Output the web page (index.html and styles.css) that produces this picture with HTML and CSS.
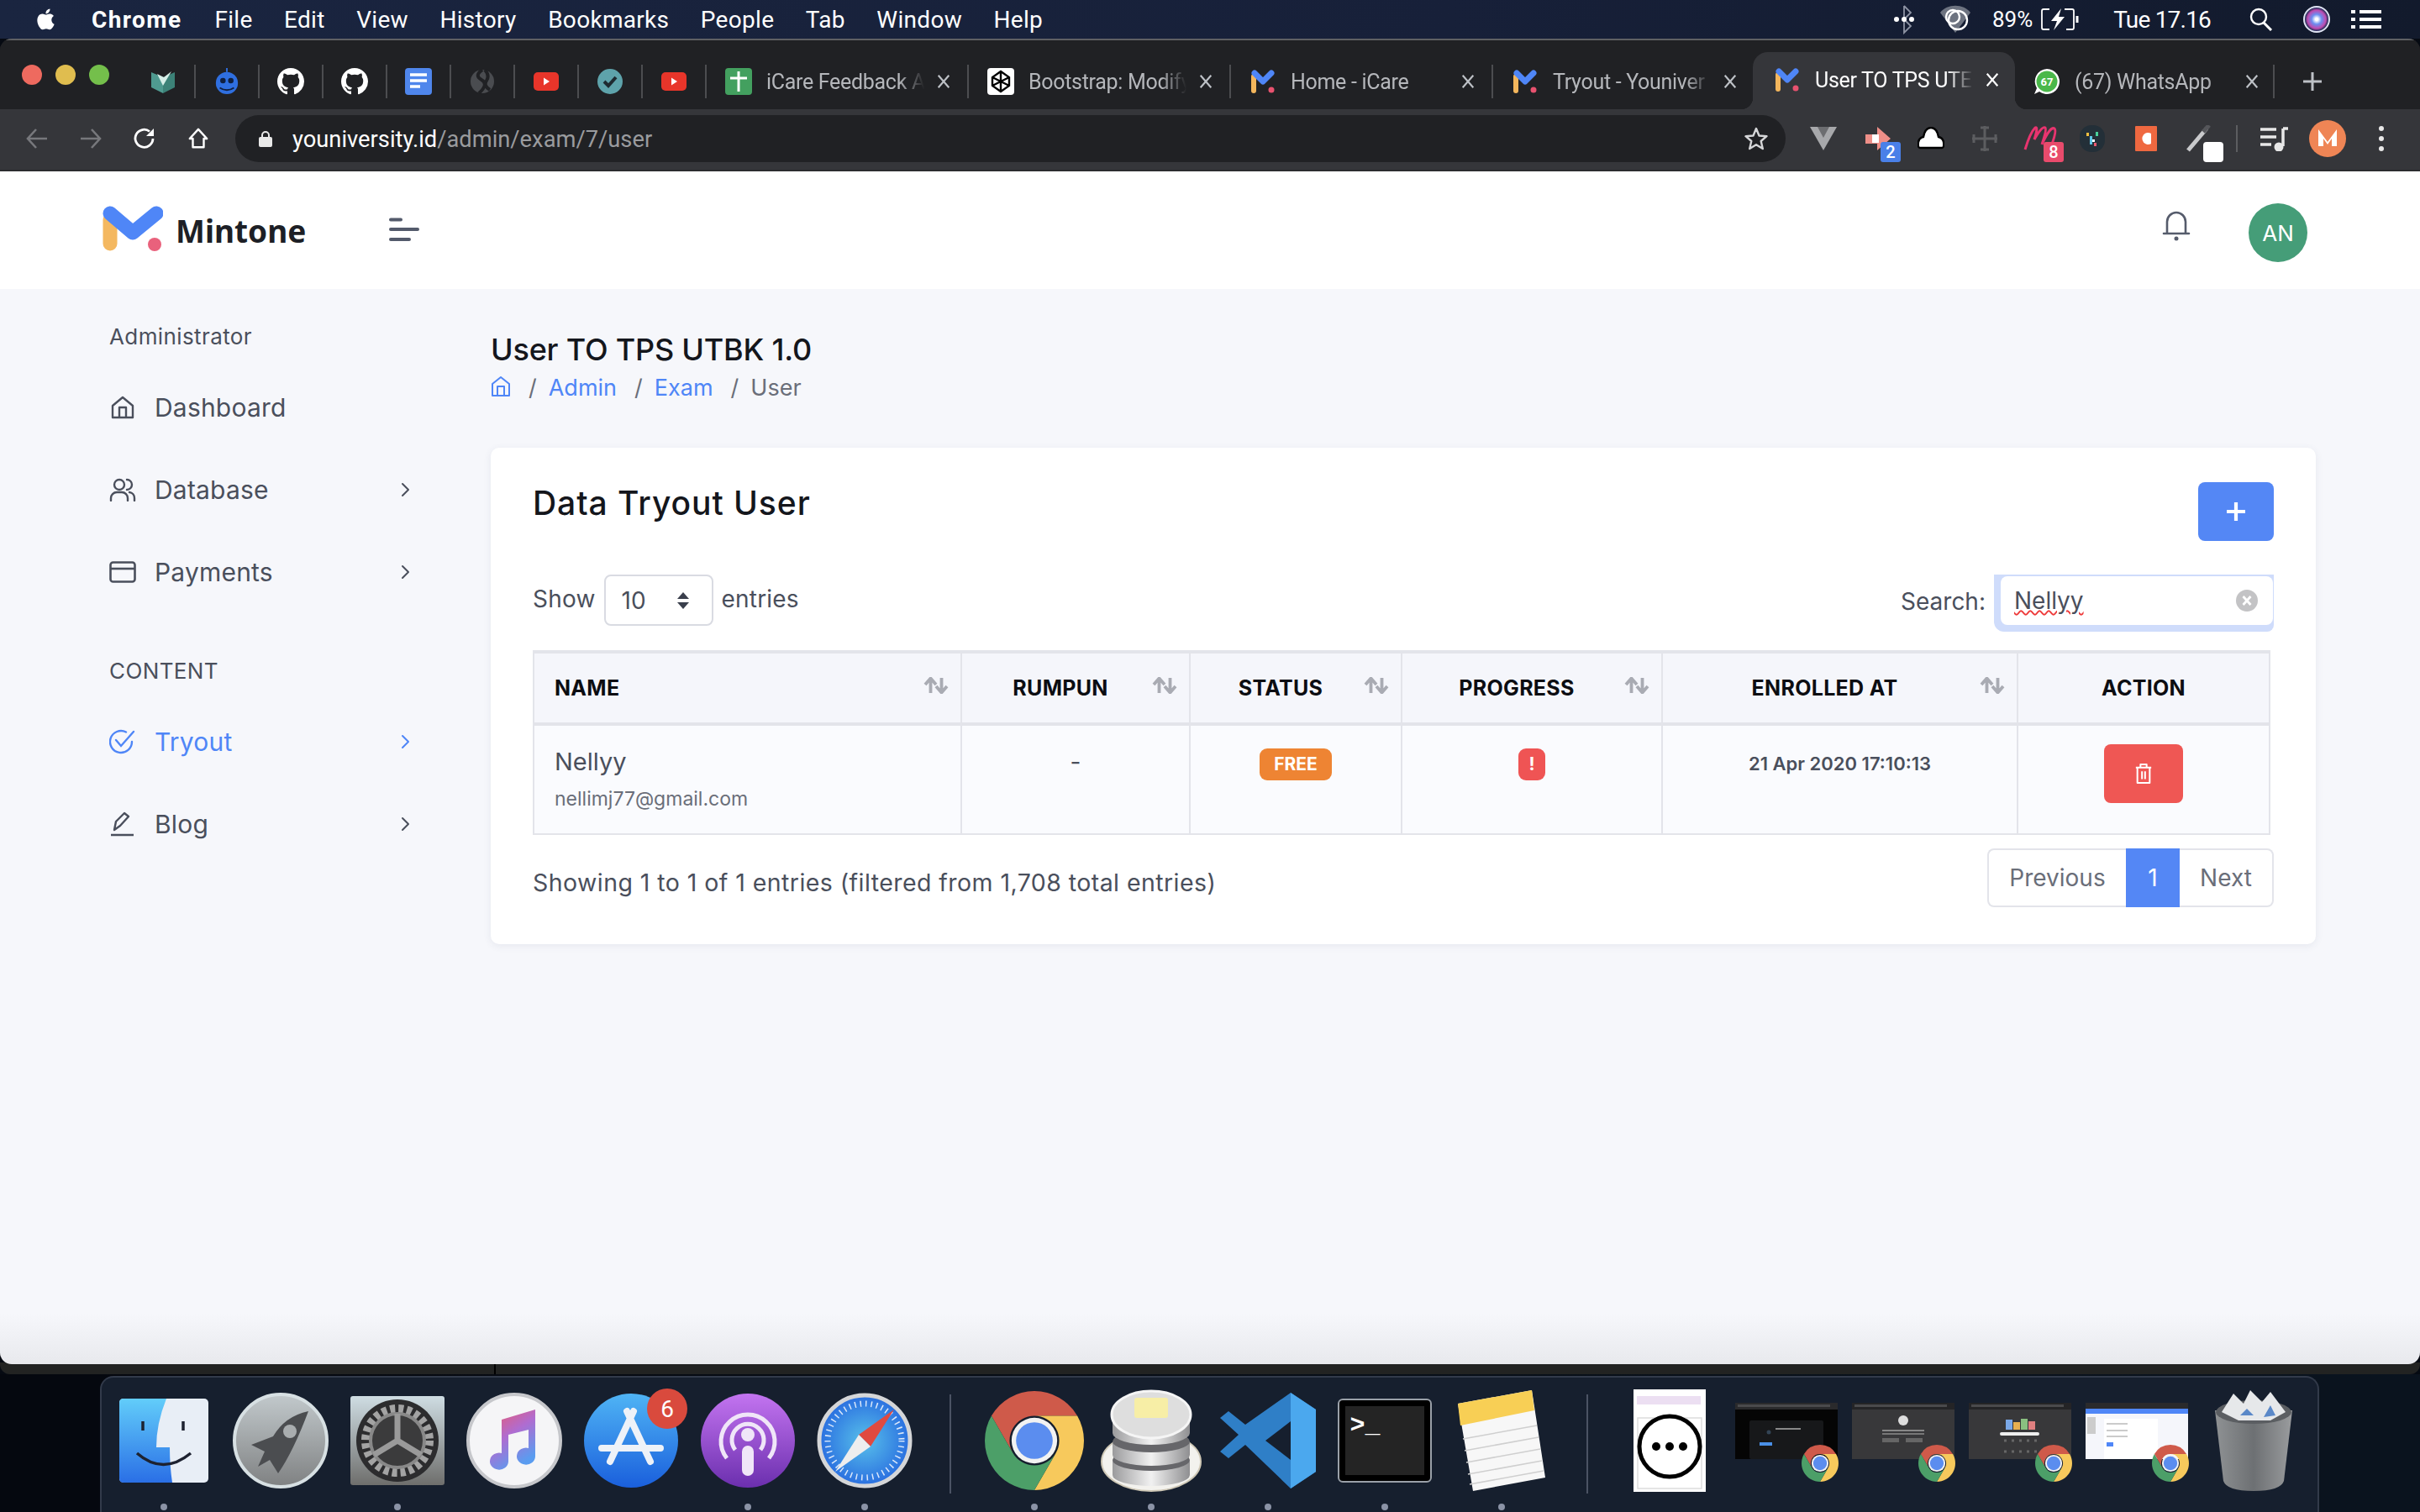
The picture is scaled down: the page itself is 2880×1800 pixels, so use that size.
FILE: index.html
```html
<!DOCTYPE html>
<html lang="en">
<head>
<meta charset="utf-8">
<title>User TO TPS UTBK 1.0</title>
<link rel="stylesheet" href="styles.css">
</head>
<body>
<svg class="defs" width="0" height="0" aria-hidden="true">
  <symbol id="chrome" viewBox="0 0 100 100">
    <path fill="#cf5a4a" d="M50 0A50 50 0 0 1 93.3 25H50A25 25 0 0 0 28.3 62.5L6.7 25A50 50 0 0 1 50 0Z"/>
    <path fill="#f7c95c" d="M93.3 25A50 50 0 0 1 50 100L71.7 62.5A25 25 0 0 0 50 25Z"/>
    <path fill="#4c9f68" d="M6.7 25L28.3 62.5A25 25 0 0 0 71.7 62.5L50 100A50 50 0 0 1 6.7 25Z"/>
    <circle cx="50" cy="50" r="23" fill="#f2f2f2"/><circle cx="50" cy="50" r="18.5" fill="#5b8def"/>
  </symbol>
  <symbol id="mfav" viewBox="0 0 30 30">
    <path d="M4 9V26" stroke="#f3b65c" stroke-width="6" stroke-linecap="round" fill="none"/>
    <path d="M5 5L15 15L25 5" stroke="#4f86f7" stroke-width="7" stroke-linecap="round" stroke-linejoin="round" fill="none"/>
    <circle cx="25" cy="25" r="3.5" fill="#e8526f"/>
  </symbol>
  <symbol id="gh" viewBox="0 0 16 16"><path fill="#fff" d="M8 0C3.58 0 0 3.58 0 8c0 3.54 2.29 6.53 5.47 7.59.4.07.55-.17.55-.38 0-.19-.01-.82-.01-1.49-2.01.37-2.53-.49-2.69-.94-.09-.23-.48-.94-.82-1.13-.28-.15-.68-.52-.01-.53.63-.01 1.08.58 1.23.82.72 1.21 1.87.87 2.33.66.07-.52.28-.87.51-1.07-1.78-.2-3.64-.89-3.64-3.95 0-.87.31-1.59.82-2.15-.08-.2-.36-1.02.08-2.12 0 0 .67-.21 2.2.82.64-.18 1.32-.27 2-.27.68 0 1.36.09 2 .27 1.53-1.04 2.2-.82 2.2-.82.44 1.1.16 1.92.08 2.12.51.56.82 1.27.82 2.15 0 3.07-1.87 3.75-3.65 3.95.29.25.54.73.54 1.48 0 1.07-.01 1.93-.01 2.2 0 .21.15.46.55.38A8.013 8.013 0 0016 8c0-4.42-3.58-8-8-8z"/></symbol>
  <symbol id="yt" viewBox="0 0 30 30"><rect x="0" y="4" width="30" height="22" rx="5" fill="#e8352a"/><path d="M12 10.500L19 15L12 19.500Z" fill="#fff"/></symbol>
  <symbol id="close" viewBox="0 0 20 20"><path d="M3 2L17 18M17 2L3 18" stroke="currentColor" stroke-width="2.400" fill="none"/></symbol>
  <symbol id="chev" viewBox="0 0 24 24"><path d="M9 5L16 12L9 19" stroke="currentColor" stroke-width="2" stroke-linecap="round" stroke-linejoin="round" fill="none"/></symbol>
  <symbol id="sort" viewBox="0 0 30 20"><path d="M8.500 19V2M2 9L8.500 1.500L15 9" stroke="#a9abb3" stroke-width="3.800" fill="none"/><path d="M21.500 1V18M15 11L21.500 18.500L28 11" stroke="#a9abb3" stroke-width="3.800" fill="none"/></symbol>
</svg>

<header class="menubar">
  <nav class="menu-left">
    <svg class="apple" viewBox="0 0 24 24" width="30" height="30"><path fill="#fff" d="M17.05 12.54c-.03-2.52 2.06-3.73 2.15-3.79-1.17-1.71-3-1.95-3.65-1.98-1.55-.16-3.03.91-3.82.91-.79 0-2-.89-3.29-.86-1.69.02-3.25.98-4.12 2.5-1.76 3.05-.45 7.56 1.26 10.03.84 1.21 1.83 2.57 3.14 2.52 1.26-.05 1.74-.82 3.26-.82 1.52 0 1.95.82 3.29.79 1.36-.02 2.22-1.23 3.05-2.45.96-1.41 1.36-2.77 1.38-2.84-.03-.01-2.65-1.02-2.65-4.01zM14.54 5.150c.7-.85 1.17-2.02 1.04-3.19-1 .04-2.22.67-2.94 1.51-.64.75-1.21 1.95-1.06 3.1 1.12.09 2.26-.57 2.96-1.42z"/></svg>
    <b class="app">Chrome</b><span>File</span><span>Edit</span><span>View</span><span>History</span><span>Bookmarks</span><span>People</span><span>Tab</span><span>Window</span><span>Help</span>
  </nav>
  <div class="menu-right">
    <svg class="st-bt" viewBox="0 0 28 36" width="28" height="36"><path d="M14 2L22 10L14 18L22 26L14 34V2M14 18" stroke="#8d93a3" stroke-width="1.800" fill="none"/><circle cx="5" cy="18" r="3" fill="#fff"/><circle cx="14" cy="18" r="3" fill="#fff"/><circle cx="23" cy="18" r="3" fill="#fff"/></svg>
    <svg class="st-cc" viewBox="0 0 40 36" width="40" height="36"><path d="M2 10C10 -1 30 -1 38 10L20 34Z" fill="#6d7380"/><circle cx="23" cy="19" r="11" fill="none" stroke="#fff" stroke-width="2.400"/><circle cx="17" cy="15" r="8" fill="none" stroke="#fff" stroke-width="2.400"/></svg>
    <span class="st-pct">89%</span>
    <svg class="st-bat" viewBox="0 0 46 26" width="46" height="26"><path d="M10 1H3Q1 1 1 3V23Q1 25 3 25H10M28 1H37Q39 1 39 3V23Q39 25 37 25H30" fill="none" stroke="#fff" stroke-width="1.800"/><path d="M43 9V17" stroke="#fff" stroke-width="3"/><path d="M24 0L12 15H19L15 26L28 10H21Z" fill="#fff"/></svg>
    <span class="st-time">Tue 17.16</span>
    <svg class="st-search" viewBox="0 0 28 28" width="28" height="28"><circle cx="11" cy="11" r="9" fill="none" stroke="#fff" stroke-width="2.400"/><path d="M17 18L26 27" stroke="#fff" stroke-width="3"/></svg>
    <span class="st-siri"></span>
    <svg class="st-list" viewBox="0 0 36 22" width="36" height="22"><path d="M0 2H5M10 2H36M0 11H5M10 11H36M0 20H5M10 20H36" stroke="#fff" stroke-width="4"/></svg>
  </div>
</header>

<div class="window">
  <div class="tabstrip">
    <div class="lights"><i class="l-red"></i><i class="l-yel"></i><i class="l-grn"></i></div>
    <div class="pin"><svg viewBox="0 0 30 30" width="30" height="32"><path d="M1 4L15 10V29L1 22Z" fill="#4f9a90"/><path d="M29 4L15 10V29L29 22Z" fill="#3c8278"/><path d="M8 6L15 20L25 3L16 10Z" fill="#d6eee8"/></svg></div>
    <div class="pin"><svg viewBox="0 0 32 34" width="30" height="32"><path d="M16 0V5" stroke="#2f6fe0" stroke-width="2"/><circle cx="16" cy="19" r="14" fill="#2f6fe0"/><circle cx="11" cy="16" r="3.500" fill="#10203f"/><circle cx="21" cy="16" r="3.500" fill="#10203f"/><path d="M7 25Q16 31 25 25" stroke="#10203f" stroke-width="2" fill="none"/></svg></div>
    <div class="pin"><svg width="32" height="32"><use href="#gh"/></svg></div>
    <div class="pin"><svg width="32" height="32"><use href="#gh"/></svg></div>
    <div class="pin"><svg viewBox="0 0 32 32" width="32" height="32"><rect width="32" height="32" rx="4" fill="#4f86ec"/><path d="M6 8H26M6 15H26M6 22H18" stroke="#fff" stroke-width="3.500"/></svg></div>
    <div class="pin"><svg viewBox="0 0 30 30" width="30" height="30"><circle cx="15" cy="15" r="14" fill="#4a4c50"/><path d="M15 1Q5 8 14 13T11 29M18 1Q24 8 20 14T24 25" stroke="#202124" stroke-width="4" fill="none"/></svg></div>
    <div class="pin"><svg width="30" height="30"><use href="#yt"/></svg></div>
    <div class="pin"><svg viewBox="0 0 30 30" width="30" height="30"><circle cx="15" cy="15" r="15" fill="#5ea3ab"/><path d="M8 15L13 20L22 10" stroke="#1e2a30" stroke-width="4" fill="none"/></svg></div>
    <div class="pin"><svg width="30" height="30"><use href="#yt"/></svg></div>

    <div class="tab"><svg class="tab-ico" viewBox="0 0 32 32" width="32" height="32"><rect width="32" height="32" rx="4" fill="#43a05f"/><path d="M16 4V28M6 12H26" stroke="#fff" stroke-width="3"/></svg><span class="tab-title">iCare Feedback A</span><svg class="tab-x" width="18" height="18"><use href="#close"/></svg></div>
    <div class="tab"><svg class="tab-ico" viewBox="0 0 32 32" width="32" height="32"><rect width="32" height="32" rx="4" fill="#fff"/><path d="M16 4L26 11V21L16 28L6 21V11ZM16 4V28M6 11L26 21M26 11L6 21" stroke="#000" stroke-width="2.400" fill="none"/></svg><span class="tab-title">Bootstrap: Modify</span><svg class="tab-x" width="18" height="18"><use href="#close"/></svg></div>
    <div class="tab"><svg class="tab-ico" width="30" height="30"><use href="#mfav"/></svg><span class="tab-title">Home - iCare</span><svg class="tab-x" width="18" height="18"><use href="#close"/></svg></div>
    <div class="tab"><svg class="tab-ico" width="30" height="30"><use href="#mfav"/></svg><span class="tab-title">Tryout - Youniver</span><svg class="tab-x" width="18" height="18"><use href="#close"/></svg></div>
    <div class="tab tab-active"><svg class="tab-ico" width="30" height="30"><use href="#mfav"/></svg><span class="tab-title">User TO TPS UTE</span><svg class="tab-x" width="18" height="18"><use href="#close"/></svg></div>
    <div class="tab tab-last"><svg class="tab-ico" viewBox="0 0 32 32" width="32" height="32"><path d="M16 1A15 15 0 1 1 7 28L1 31L4 24A15 15 0 0 1 16 1Z" fill="#fff"/><circle cx="16" cy="16" r="12.500" fill="#4ab84a"/><text x="16" y="21" class="wa-num">67</text></svg><span class="tab-title">(67) WhatsApp</span><svg class="tab-x" width="18" height="18"><use href="#close"/></svg></div>
    <svg class="newtab" viewBox="0 0 24 24" width="24" height="24"><path d="M12 1V23M1 12H23" stroke="#bdc1c6" stroke-width="3"/></svg>
  </div>

  <div class="toolbar">
    <div class="navbtn"><svg viewBox="0 0 28 28" width="28" height="28"><path d="M26 14H3M13 3L3 14L13 25" stroke="#77787c" stroke-width="2.600" fill="none"/></svg></div>
    <div class="navbtn"><svg viewBox="0 0 28 28" width="28" height="28"><path d="M2 14H25M15 3L25 14L15 25" stroke="#77787c" stroke-width="2.600" fill="none"/></svg></div>
    <div class="navbtn"><svg viewBox="0 0 28 28" width="28" height="28"><path d="M24 14A10.500 10.500 0 1 1 20 5.500" stroke="#fff" stroke-width="2.800" fill="none"/><path d="M25 2V11H16Z" fill="#fff"/></svg></div>
    <div class="navbtn"><svg viewBox="0 0 28 28" width="26" height="28"><path d="M14 2L25 14H21V25H7V14H3Z" stroke="#fff" stroke-width="2.600" fill="none" stroke-linejoin="round"/></svg></div>
    <div class="omnibox">
      <svg class="lock" viewBox="0 0 16 20" width="16" height="20"><path d="M4 9V6A4 4 0 0 1 12 6V9" stroke="#e8e8e8" stroke-width="2" fill="none"/><rect x="0" y="8" width="16" height="12" rx="2" fill="#e8e8e8"/></svg>
      <span class="url"><b>youniversity.id</b>/admin/exam/7/user</span>
      <svg class="star" viewBox="0 0 28 28" width="28" height="28"><path d="M14 2L17.500 10.500L26.500 11.200L19.700 17L21.800 26L14 21.200L6.200 26L8.300 17L1.500 11.200L10.500 10.500Z" stroke="#d5d6d8" stroke-width="2.400" fill="none" stroke-linejoin="round"/></svg>
    </div>
    <div class="ext"><svg viewBox="0 0 32 28" width="32" height="28"><path d="M0 0H32L16 28Z" fill="#a7a8ab"/><path d="M9 0H23L16 13Z" fill="#6c6d70"/></svg></div>
    <div class="ext"><svg viewBox="0 0 32 28" width="32" height="28"><path d="M16 0L32 14L16 28V20H2V9H16Z" fill="#ee8f88"/><rect x="10" y="9" width="8" height="10" fill="#fff"/></svg><span class="xb xb-blue">2</span></div>
    <div class="ext"><svg viewBox="0 0 32 28" width="32" height="28"><path d="M3 25Q0 25 1 18Q2 13 7 12Q9 1 16 1Q23 1 25 12Q30 13 31 18Q32 25 29 25Z" fill="#fff" stroke="#000" stroke-width="2.400"/></svg></div>
    <div class="ext"><svg viewBox="0 0 32 32" width="32" height="32"><path d="M16 1V31M1 16H31M11 3H21M11 29H21M3 11V21M29 11V21" stroke="#5c5d60" stroke-width="3"/></svg></div>
    <div class="ext"><svg class="ext-m" viewBox="0 0 44 30" width="44" height="30"><path d="M2 28Q8 8 14 2Q18 0 13 16Q22 0 26 2Q28 4 22 22Q32 0 37 3Q40 6 33 24" stroke="#e8346f" stroke-width="3" fill="none"/></svg><span class="xb xb-red">8</span></div>
    <div class="ext"><svg viewBox="0 0 30 32" width="30" height="32"><rect width="30" height="32" rx="14" fill="#232f38"/><rect x="8" y="9" width="3" height="4" fill="#f0c040"/><rect x="12" y="13" width="3" height="10" fill="#5ec8e8"/><rect x="19" y="8" width="3" height="5" fill="#4ad09a"/><rect x="15" y="17" width="3" height="3" fill="#fff"/><rect x="17" y="21" width="3" height="4" fill="#e85a70"/></svg></div>
    <div class="ext"><svg viewBox="0 0 26 30" width="26" height="30"><rect width="26" height="30" rx="1" fill="#ef6840"/><path d="M19 9A7 7 0 1 0 19 21Z" fill="#fff"/></svg></div>
    <div class="ext"><svg viewBox="0 0 32 32" width="32" height="32"><path d="M2 30L24 4" stroke="#c9cacc" stroke-width="5"/><path d="M20 8L27 0" stroke="#55565a" stroke-width="5"/></svg><span class="xb xb-white"></span></div>
    <span class="tb-sep"></span>
    <div class="ext"><svg viewBox="0 0 34 30" width="34" height="30"><path d="M1 4H20M1 13H20M1 22H14" stroke="#e8e8e8" stroke-width="3.500"/><path d="M28 3V24" stroke="#e8e8e8" stroke-width="3.500"/><path d="M28 3H34" stroke="#e8e8e8" stroke-width="3.500"/><circle cx="23" cy="25" r="5.500" fill="#e8e8e8"/></svg></div>
    <div class="ext"><span class="profile"><svg viewBox="0 0 44 44" width="44" height="44"><path d="M11 31V11L22 26L33 11V31H27V22L22 29L17 22V31Z" fill="#fff"/></svg></span></div>
    <div class="ext"><span class="kebab"><i></i><i></i><i></i></span></div>
  </div>

  <div class="site">
    <div class="topbar">
      <svg class="logo" viewBox="0 0 72 56" width="72" height="56"><path d="M9 17V45" stroke="#f4b860" stroke-width="17" stroke-linecap="round" fill="none"/><path d="M9 9L36 32L64 9" stroke="#4f86f7" stroke-width="17" stroke-linecap="round" stroke-linejoin="round" fill="none"/><circle cx="62" cy="46" r="8" fill="#e9617c"/></svg>
      <span class="brand">Mintone</span>
      <svg class="burger" viewBox="0 0 36 28" width="36" height="28"><path d="M2 2.500H14M2 14H34M2 26H24" stroke="#535a6b" stroke-width="4" stroke-linecap="round"/></svg>
      <svg class="bell" viewBox="0 0 34 36" width="34" height="36"><path d="M2 27H32M6 27V13A11 11 0 0 1 28 13V27" stroke="#565c6c" stroke-width="2.600" fill="none" stroke-linecap="round"/><circle cx="17" cy="33" r="2.500" fill="#565c6c"/></svg>
      <div class="avatar">AN</div>
    </div>

    <div class="page">
      <aside class="sidebar">
        <div class="side-label">Administrator</div>
        <a class="side-item"><svg class="side-ico" viewBox="0 0 28 28" width="28" height="28"><path d="M2 26V12L14 2L26 12V26ZM10 26V14H18V26" stroke="currentColor" stroke-width="2.400" fill="none" stroke-linejoin="round"/></svg><span>Dashboard</span></a>
        <a class="side-item"><svg class="side-ico" viewBox="0 0 32 28" width="32" height="28"><circle cx="12" cy="8" r="6" stroke="currentColor" stroke-width="2.400" fill="none"/><path d="M2 27V24A7 7 0 0 1 9 17H15A7 7 0 0 1 22 24V27M21 2A6 6 0 0 1 21 14M24 17A7 7 0 0 1 30 24V27" stroke="currentColor" stroke-width="2.400" fill="none" stroke-linecap="round"/></svg><span>Database</span><svg class="side-chev" width="24" height="24"><use href="#chev"/></svg></a>
        <a class="side-item"><svg class="side-ico" viewBox="0 0 32 26" width="32" height="26"><rect x="1.500" y="1.500" width="29" height="23" rx="3" stroke="currentColor" stroke-width="2.600" fill="none"/><path d="M1.500 9H30.500" stroke="currentColor" stroke-width="2.600"/></svg><span>Payments</span><svg class="side-chev" width="24" height="24"><use href="#chev"/></svg></a>
        <div class="side-label side-label-2">CONTENT</div>
        <a class="side-item side-on"><svg class="side-ico" viewBox="0 0 32 30" width="32" height="30"><path d="M27 15A13 13 0 1 1 20 3.500" stroke="currentColor" stroke-width="2.400" fill="none" stroke-linecap="round"/><path d="M8 13L14 20L29 3" stroke="currentColor" stroke-width="2.400" fill="none" stroke-linecap="round"/></svg><span>Tryout</span><svg class="side-chev" width="24" height="24"><use href="#chev"/></svg></a>
        <a class="side-item"><svg class="side-ico" viewBox="0 0 30 30" width="30" height="30"><path d="M5 22L7 12L17 2L22 6L12 17ZM1 28H28" stroke="currentColor" stroke-width="2.400" fill="none" stroke-linejoin="round"/></svg><span>Blog</span><svg class="side-chev" width="24" height="24"><use href="#chev"/></svg></a>
      </aside>

      <main class="main">
        <h1 class="page-title">User TO TPS UTBK 1.0</h1>
        <div class="crumbs">
          <svg class="crumb-home" viewBox="0 0 24 26" width="24" height="26"><path d="M2 24V10L12 2L22 10V24ZM8 24V13H16V24" stroke="#4f86f7" stroke-width="2" fill="none" stroke-linejoin="round"/></svg>
          <span class="crumb-sep">/</span><a class="crumb-link">Admin</a><span class="crumb-sep">/</span><a class="crumb-link">Exam</a><span class="crumb-sep">/</span><span class="crumb-now">User</span>
        </div>

        <section class="card">
          <div class="card-head">
            <h2 class="card-title">Data Tryout User</h2>
            <button class="btn-add"><svg viewBox="0 0 26 26" width="26" height="26"><path d="M13 2V24M2 13H24" stroke="#fff" stroke-width="4.200"/></svg></button>
          </div>
          <div class="controls">
            <div class="length"><span>Show</span>
              <div class="select"><span>10</span><svg viewBox="0 0 16 24" width="16" height="24"><path d="M8 2L15 10H1ZM8 22L1 14H15Z" fill="#3a3f4c"/></svg></div>
              <span>entries</span></div>
            <div class="search"><span>Search:</span>
              <div class="ring"><div class="search-box"><span class="typed">Nellyy</span><svg viewBox="0 0 28 28" width="28" height="28"><circle cx="14" cy="14" r="13" fill="#c3c3c5"/><path d="M9.500 9L18.500 19M18.500 9L9.500 19" stroke="#fff" stroke-width="2.800"/></svg></div></div>
            </div>
          </div>

          <table class="grid">
            <colgroup><col class="c1"><col class="c2"><col class="c3"><col class="c4"><col class="c5"><col class="c6"></colgroup>
            <thead><tr>
              <th class="th-left">NAME<svg class="sort" width="30" height="20"><use href="#sort"/></svg></th>
              <th class="th-sort">RUMPUN<svg class="sort" width="30" height="20"><use href="#sort"/></svg></th>
              <th class="th-sort">STATUS<svg class="sort" width="30" height="20"><use href="#sort"/></svg></th>
              <th class="th-sort">PROGRESS<svg class="sort" width="30" height="20"><use href="#sort"/></svg></th>
              <th class="th-sort">ENROLLED AT<svg class="sort" width="30" height="20"><use href="#sort"/></svg></th>
              <th>ACTION</th>
            </tr></thead>
            <tbody><tr>
              <td class="td-name"><div class="u-name">Nellyy</div><div class="u-mail">nellimj77@gmail.com</div></td>
              <td class="td-dash">-</td>
              <td class="td-badge"><span class="badge badge-free">FREE</span></td>
              <td class="td-badge"><span class="badge badge-warn">!</span></td>
              <td class="td-date">21 Apr 2020 17:10:13</td>
              <td class="td-act"><button class="btn-del"><svg viewBox="0 0 24 28" width="22" height="26"><path d="M2 6H22M8 6V2H16V6M4 6V26H20V6M10 11V21M14 11V21" stroke="#fff" stroke-width="2.200" fill="none" stroke-linejoin="round"/></svg></button></td>
            </tr></tbody>
          </table>

          <div class="foot">
            <span class="info">Showing 1 to 1 of 1 entries (filtered from 1,708 total entries)</span>
            <div class="pager"><a class="pg pg-prev">Previous</a><a class="pg pg-on">1</a><a class="pg pg-next">Next</a></div>
          </div>
        </section>
      </main>
    </div>
  </div>
</div>

<div class="behind"></div>

<footer class="dockrow">
  <div class="dock">
    <div class="slot"><svg viewBox="0 0 106 100" width="106" height="100"><defs><linearGradient id="fb" x1="0" y1="0" x2="0" y2="1"><stop offset="0" stop-color="#62cdfa"/><stop offset="1" stop-color="#2a6fe6"/></linearGradient></defs><rect width="106" height="100" rx="5" fill="#e8eef6"/><path d="M5 0H56Q44 30 44 58H60Q60 80 63 100H5Q0 100 0 95V5Q0 0 5 0Z" fill="url(#fb)"/><path d="M28 27V38M76 27V38" stroke="#1d2230" stroke-width="3.500"/><path d="M21 65Q52 92 85 65" stroke="#1d2230" stroke-width="3.500" fill="none"/></svg><i class="dot"></i></div>
    <div class="slot"><svg viewBox="0 0 114 114" width="114" height="114"><defs><linearGradient id="lp" x1="0" y1="0" x2="0" y2="1"><stop offset="0" stop-color="#c2c9cc"/><stop offset="1" stop-color="#7f8182"/></linearGradient></defs><circle cx="57" cy="57" r="55" fill="url(#lp)" stroke="#d7e0e3" stroke-width="4"/><path d="M90 22Q62 28 48 52L22 62L38 70L30 88L44 80L54 96Q72 70 90 22Z" fill="#4b4d50"/><circle cx="68" cy="46" r="8" fill="#a9adaf"/></svg><i class="dot dot-off"></i></div>
    <div class="slot"><svg viewBox="0 0 112 106" width="112" height="106"><defs><linearGradient id="sp" x1="0" y1="0" x2="0" y2="1"><stop offset="0" stop-color="#cfdde3"/><stop offset="1" stop-color="#6e6e6c"/></linearGradient></defs><rect width="112" height="106" rx="3" fill="url(#sp)"/><circle cx="56" cy="53" r="49" fill="#2c2c2e"/><circle cx="56" cy="53" r="38" fill="none" stroke="#a3a3a3" stroke-width="10" stroke-dasharray="6 4"/><circle cx="56" cy="53" r="32" fill="#3b3b3c" stroke="#888" stroke-width="4"/><path d="M56 53V21M56 53L28 70M56 53L84 70" stroke="#9a9a9a" stroke-width="7"/></svg><i class="dot"></i></div>
    <div class="slot"><svg viewBox="0 0 114 114" width="114" height="114"><defs><linearGradient id="mn" x1="0" y1="0" x2="0.500" y2="1"><stop offset="0" stop-color="#ee5868"/><stop offset="0.500" stop-color="#b06cd0"/><stop offset="1" stop-color="#5a9cf0"/></linearGradient></defs><circle cx="57" cy="57" r="55" fill="#f5f5f7" stroke="#c6c7cb" stroke-width="4"/><path d="M42 32L82 20V76A11 10 0 1 1 74 66V44L50 50V82A11 10 0 1 1 42 72Z" fill="url(#mn)"/></svg><i class="dot dot-off"></i></div>
    <div class="slot"><svg viewBox="0 0 114 114" width="114" height="114"><defs><linearGradient id="as" x1="0" y1="0" x2="0" y2="1"><stop offset="0" stop-color="#4fb4f5"/><stop offset="1" stop-color="#1a5fdc"/></linearGradient></defs><circle cx="57" cy="57" r="56" fill="url(#as)"/><path d="M52 22L80 82M60 22L32 82M22 66H92" stroke="#eef2f8" stroke-width="8" stroke-linecap="round"/></svg><span class="dock-badge">6</span><i class="dot dot-off"></i></div>
    <div class="slot"><svg viewBox="0 0 114 114" width="114" height="114"><defs><linearGradient id="pc" x1="0" y1="0" x2="0" y2="1"><stop offset="0" stop-color="#c374f0"/><stop offset="1" stop-color="#6b2fae"/></linearGradient></defs><circle cx="57" cy="57" r="56" fill="url(#pc)"/><path d="M32 78A32 32 0 1 1 82 78M42 68A19 19 0 1 1 72 68" stroke="#f0e6f8" stroke-width="5" fill="none"/><circle cx="57" cy="50" r="8" fill="#f0e6f8"/><rect x="50" y="63" width="14" height="36" rx="7" fill="#f0e6f8"/></svg><i class="dot"></i></div>
    <div class="slot"><svg viewBox="0 0 114 114" width="114" height="114"><defs><radialGradient id="sf"><stop offset="0" stop-color="#58c0ea"/><stop offset="1" stop-color="#2a6fe0"/></radialGradient></defs><circle cx="57" cy="57" r="54" fill="url(#sf)" stroke="#d5d6d8" stroke-width="5"/><circle cx="57" cy="57" r="44" fill="none" stroke="#dbe8fb" stroke-width="7" stroke-dasharray="1.500 5"/><path d="M92 20L64 64L50 50Z" fill="#e04a40"/><path d="M22 94L50 50L64 64Z" fill="#eee"/></svg><i class="dot"></i></div>
    <span class="dock-sep"></span>
    <div class="slot"><svg width="118" height="118"><use href="#chrome"/></svg><i class="dot"></i></div>
    <div class="slot"><svg viewBox="0 0 120 122" width="120" height="122"><defs><linearGradient id="sq" x1="0" y1="0" x2="1" y2="0"><stop offset="0" stop-color="#9b9b9d"/><stop offset="0.500" stop-color="#f1f1f1"/><stop offset="1" stop-color="#8f8f91"/></linearGradient></defs><ellipse cx="60" cy="86" rx="59" ry="35" fill="#f3f2ee" stroke="#cfc8b6" stroke-width="2"/><rect x="14" y="84" width="92" height="18" fill="url(#sq)"/><ellipse cx="60" cy="102" rx="46" ry="13" fill="url(#sq)"/><ellipse cx="60" cy="84" rx="46" ry="13" fill="#66666a"/><rect x="14" y="62" width="92" height="16" fill="url(#sq)"/><ellipse cx="60" cy="78" rx="46" ry="13" fill="url(#sq)"/><ellipse cx="60" cy="62" rx="46" ry="13" fill="#66666a"/><rect x="14" y="30" width="92" height="22" fill="url(#sq)"/><ellipse cx="60" cy="52" rx="46" ry="14" fill="url(#sq)"/><ellipse cx="60" cy="30" rx="47" ry="28" fill="#dedede" stroke="#f5f5f5" stroke-width="3"/><rect x="40" y="10" width="40" height="24" rx="3" fill="#f7eea6"/></svg><i class="dot"></i></div>
    <div class="slot"><svg viewBox="0 0 114 114" width="114" height="114"><path d="M84 0L114 20V94L84 114L30 62L10 78L0 70L22 50L0 30L10 22L30 38Z" fill="#2f7fc7"/><path d="M84 0L114 20V94L84 114Z" fill="#4ba8ee"/><path d="M84 34L54 57L84 80Z" fill="#161f2e"/></svg><i class="dot"></i></div>
    <div class="slot"><div class="term"><span class="term-inner">&gt;_</span></div><i class="dot"></i></div>
    <div class="slot"><svg viewBox="0 0 104 120" width="104" height="120"><path d="M0 16L88 0L104 104L18 120Z" fill="#f7f7f7"/><path d="M0 16L88 0L91 24L3 42Z" fill="#f8cf55"/><path d="M6 58L94 42M8 72L96 56M10 86L98 70M12 100L100 84M14 112L102 96" stroke="#cfcfcf" stroke-width="1.500"/></svg><i class="dot"></i></div>
    <span class="dock-sep dock-sep-2"></span>
    <div class="slot"><svg viewBox="0 0 86 122" width="86" height="122"><rect width="86" height="122" fill="#fff"/><rect x="4" y="8" width="76" height="10" fill="#ecdff2"/><rect x="5" y="34" width="76" height="84" fill="none" stroke="#ddd" stroke-width="1.500"/><ellipse cx="43" cy="68" rx="36" ry="36" fill="none" stroke="#000" stroke-width="5"/><circle cx="27" cy="68" r="5" fill="#000"/><circle cx="43" cy="68" r="5" fill="#000"/><circle cx="59" cy="68" r="5" fill="#000"/></svg><i class="dot dot-off"></i></div>
    <div class="slot"><div class="thumb thumb-black"><svg viewBox="0 0 122 67" width="122" height="67"><rect width="122" height="8" fill="#2a2a2c"/><rect x="3" y="2" width="110" height="3" fill="#4a4a4c"/><rect x="17" y="21" width="88" height="46" rx="2" fill="#17181a"/><rect x="29" y="47" width="15" height="4" fill="#4a90e8"/><circle cx="40" cy="35" r="2.500" fill="#345"/><rect x="48" y="30" width="30" height="2" fill="#888"/></svg><svg class="mini" width="44" height="44"><use href="#chrome"/></svg></div></div>
    <div class="slot"><div class="thumb thumb-grey"><svg viewBox="0 0 122 67" width="122" height="67"><rect width="122" height="8" fill="#242426"/><rect x="3" y="2" width="110" height="3" fill="#4a4a4c"/><circle cx="61" cy="21" r="6" fill="#ddd"/><rect x="36" y="32" width="50" height="2" fill="#888"/><rect x="36" y="36" width="50" height="2" fill="#777"/><rect x="36" y="42" width="20" height="5" fill="#666"/><rect x="64" y="42" width="20" height="5" fill="#666"/></svg><svg class="mini" width="44" height="44"><use href="#chrome"/></svg></div></div>
    <div class="slot"><div class="thumb thumb-grey"><svg viewBox="0 0 122 67" width="122" height="67"><rect width="122" height="8" fill="#242426"/><rect x="3" y="2" width="110" height="3" fill="#4a4a4c"/><rect x="44" y="20" width="8" height="12" fill="#7aa8e8"/><rect x="53" y="23" width="8" height="9" fill="#e8b050"/><rect x="62" y="19" width="8" height="13" fill="#8ac080"/><rect x="71" y="22" width="8" height="10" fill="#e08080"/><rect x="37" y="35" width="47" height="4" rx="2" fill="#eee"/><path d="M42 45H82M42 58H82" stroke="#666" stroke-width="3" stroke-dasharray="3 6"/></svg><svg class="mini" width="44" height="44"><use href="#chrome"/></svg></div></div>
    <div class="slot"><div class="thumb thumb-white"><svg viewBox="0 0 122 67" width="122" height="67"><rect width="122" height="7" fill="#2a2a2c"/><rect y="7" width="122" height="6" fill="#4f86f7"/><rect x="0" y="13" width="122" height="54" fill="#f5f6fb"/><rect x="2" y="17" width="10" height="20" fill="#ccc"/><rect x="22" y="19" width="64" height="48" fill="#fff"/><rect x="25" y="47" width="8" height="5" fill="#4f86f7"/><path d="M25 25H50M25 33H50M25 40H50" stroke="#bbb" stroke-width="1.500"/></svg><svg class="mini" width="44" height="44"><use href="#chrome"/></svg></div></div>
    <div class="slot"><svg viewBox="0 0 92 120" width="92" height="120"><defs><linearGradient id="tr" x1="0" y1="0" x2="1" y2="0"><stop offset="0" stop-color="#8f9294"/><stop offset="0.500" stop-color="#6d7073"/><stop offset="1" stop-color="#9a9c9e"/></linearGradient></defs><path d="M0 24H92L82 108Q78 120 46 120Q14 120 10 108Z" fill="url(#tr)"/><ellipse cx="46" cy="26" rx="45" ry="14" fill="#5b5e62"/><path d="M8 26L22 4L34 16L42 0L56 14L66 2L84 26L66 36H28Z" fill="#e6e8ea"/><path d="M30 30L38 22L46 30ZM58 32L66 18L72 30Z" fill="#5a88c8"/></svg></div>
  </div>
</footer>
</body>
</html>
```

FILE: styles.css
```css
* { box-sizing: border-box; }
html, body { margin: 0; padding: 0; }
body {
  width: 2880px; height: 1800px; overflow: hidden;
  background: #060a12;
  display: flex; flex-direction: column;
  font-family: Inter, "Liberation Sans", sans-serif;
  color: #4a4f5c;
}
.defs { position: absolute; }
svg { display: block; flex: none; }

/* menu bar */
.menubar {
  height: 46px; flex: none;
  display: flex; align-items: center; justify-content: space-between;
  background: linear-gradient(90deg, #1a2540, #172039 60%, #121a2c);
  color: #fff; font-family: Roboto, sans-serif; font-size: 28px;
}
.menu-left { display: flex; align-items: center; }
.apple { margin: 0 39px 0 40px; }
.menu-left span { margin-right: 37.500px; letter-spacing: .3px; }
.menu-left .app { margin-right: 39px; font-weight: 700; letter-spacing: 1.400px; }
.menu-right { display: flex; align-items: center; }
.st-bt { margin-right: 27px; }
.st-cc { margin-right: 24px; }
.st-pct { margin-right: 10px; font-size: 26px; }
.st-bat { margin-right: 40px; }
.st-time { margin-right: 46px; letter-spacing: -.8px; }
.st-search { margin-right: 36px; }
.st-siri {
  width: 32px; height: 32px; border-radius: 50%; margin-right: 25px;
  background: radial-gradient(circle, #fff 8%, #6a8df0 30%, #c04bb0 55%, #1d2b56 70%);
  border: 2px solid #dfe3f2;
}
.st-list { margin-right: 46px; }

/* window */
.window {
  height: 1578px; flex: none;
  display: flex; flex-direction: column;
  border-radius: 14px; overflow: hidden;
  background: #202124;
}
.tabstrip {
  height: 84px; flex: none;
  display: flex; align-items: flex-end;
  border-top: 2px solid #5f6063;
  background: #202124;
  color: #b5b7bb;
  font-family: Roboto, sans-serif;
  font-size: 25px;
}
.lights { width: 157px; height: 68px; align-self: flex-start; padding: 29px 0 0 26px; display: flex; gap: 16px; }
.lights i { width: 24px; height: 24px; border-radius: 50%; }
.l-red { background: #ee6a5f; }
.l-yel { background: #e0bd4f; }
.l-grn { background: #74bf4b; }
.pin {
  width: 76px; height: 40px; margin-bottom: 13px;
  display: flex; align-items: center; justify-content: center;
  border-right: 2px solid #4c4d50;
}
.tab {
  width: 312px; height: 40px; margin-bottom: 13px;
  display: flex; align-items: center; position: relative;
  padding-left: 22px;
  border-right: 2px solid #4c4d50;
}
.tab-ico { width: 32px; }
.tab-title {
  width: 192px; margin-left: 17px; overflow: hidden; white-space: nowrap; letter-spacing: -.3px;
  -webkit-mask-image: linear-gradient(90deg, #000 82%, transparent 98%);
  mask-image: linear-gradient(90deg, #000 82%, transparent 98%);
}
.tab-x { margin-left: 10px; color: #bdc1c6; }
.tab-active {
  height: 68px; margin: 0 0 0 -3px; width: 312px; padding-left: 25px; padding-bottom: 2px;
  background: #35363a; color: #fff; border-right: 0;
  border-radius: 18px 18px 0 0;
}
.tab-active .tab-x { color: #fff; }
.tab-active::before, .tab-active::after {
  content: ""; position: absolute; bottom: 0; width: 14px; height: 14px;
}
.tab-active::before { left: -14px; background: radial-gradient(circle at 0 0, transparent 14px, #35363a 14.500px); }
.tab-active::after { right: -14px; background: radial-gradient(circle at 100% 0, transparent 14px, #35363a 14.500px); }
.tab-last { width: 309px; }
.wa-num { fill: #fff; font: 700 13px Roboto, sans-serif; text-anchor: middle; }
.newtab { margin: 0 0 21px 33px; }

/* toolbar */
.toolbar {
  height: 74px; flex: none;
  display: flex; align-items: center;
  padding: 0 0 2px 12px;
  background: #35363a;
  border-bottom: 2px solid #2b2c2f;
}
.navbtn { width: 64px; display: flex; justify-content: center; }
.omnibox {
  width: 1845px; height: 56px; margin: 0 13px 0 12px;
  display: flex; align-items: center;
  padding-left: 28px;
  border-radius: 28px;
  background: #202124;
}
.url { margin-left: 24px; margin-top: 2px; font-family: Roboto, sans-serif; font-size: 27.300px; color: #9a9b9e; }
.url b { font-weight: 400; color: #fff; }
.star { margin-left: auto; margin-right: 21px; }
.ext { width: 64px; height: 64px; display: flex; justify-content: center; align-items: center; position: relative; }
.ext-m { margin-left: 8px; }
.xb {
  position: absolute; top: 36px;
  width: 24px; height: 24px; border-radius: 3px;
  display: flex; align-items: center; justify-content: center;
  font: 500 20px Roboto, sans-serif; color: #fff;
}
.xb-blue { background: #4a80e8; left: 36px; }
.xb-red { background: #e94b6c; left: 38px; }
.xb-white { background: #fff; left: 36px; border-radius: 4px; }
.tb-sep { width: 2px; height: 32px; margin: 0 11px; background: #5c5d60; }
.profile { width: 44px; height: 44px; border-radius: 50%; background: #ef8555; }
.kebab { display: flex; flex-direction: column; gap: 6px; }
.kebab i { width: 6px; height: 6px; border-radius: 50%; background: #e8e8e8; }

/* site */
.site { flex: 1; min-height: 0; display: flex; flex-direction: column; background: linear-gradient(0deg, #e8e9ed, #f6f7fb 60px); }
.topbar {
  height: 140px; flex: none;
  display: flex; align-items: center;
  padding: 0 134px 0 122px;
  background: #fff;
}
.logo { margin-top: -2px; }
.brand { margin-left: 15px; font-family: "Noto Sans", sans-serif; font-weight: 700; font-size: 37px; color: #1d1f26; }
.burger { margin-left: 99px; margin-top: -2px; }
.bell { margin-left: auto; margin-right: 69px; margin-top: -10px; }
.avatar {
  width: 70px; height: 70px; margin-top: 6px; border-radius: 50%;
  display: flex; align-items: center; justify-content: center;
  background: #459d78; color: #fff; font-size: 26px;
}

.page { flex: 1; min-height: 0; display: flex; }
.sidebar { width: 584px; flex: none; padding: 44px 90px 0 130px; }
.side-label { height: 26px; line-height: 26px; margin-bottom: 22px; font-size: 26px; letter-spacing: .4px; color: #4a4f5c; }
.side-label-2 { margin-top: 56px; }
.side-item {
  height: 98px; display: flex; align-items: center;
  font-size: 30px; letter-spacing: .2px; color: #4a4f5c;
}
.side-ico { width: 32px; margin-right: 22px; }
.side-chev { margin-left: auto; }
.side-on { color: #4f86f7; }

.main { flex: 1; min-width: 0; padding-top: 50px; }
.page-title { margin: 0; height: 44px; line-height: 44px; font-size: 36px; letter-spacing: -.2px; font-weight: 500; color: #14161c; }
.crumbs { height: 34px; margin-top: 6px; display: flex; align-items: center; font-size: 27px; }
.crumb-sep { margin: 0 14px 0 21px; color: #6a6e79; }
.crumb-link { color: #4f86f7; }
.crumb-now { color: #6a6e79; }
.crumb-home { margin-top: -2px; }

.card {
  width: 2172px; margin-top: 55px; padding: 41px 50px 44px 50px;
  background: #fff; border-radius: 10px;
  box-shadow: 0 2px 10px rgba(70, 80, 110, .09);
}
.card-head { height: 70px; display: flex; justify-content: space-between; align-items: flex-start; }
.card-title { margin: 2px 0 0; line-height: 46px; font-size: 39px; letter-spacing: .95px; font-weight: 500; color: #14161c; }
.btn-add {
  width: 90px; height: 70px; padding: 0; border: 0; border-radius: 8px;
  display: flex; align-items: center; justify-content: center;
  background: #5487f5;
}
.controls { margin-top: 40px; height: 61px; display: flex; justify-content: space-between; font-size: 28px; }
.length { display: flex; align-items: center; gap: 10px; height: 61px; letter-spacing: .2px; }
.length > span { margin-top: -4px; }
.select {
  width: 130px; height: 61px; padding: 0 26px 0 19px;
  display: flex; align-items: center; justify-content: space-between;
  border: 2px solid #d9dbe2; border-radius: 8px; background: #fff;
}
.search { display: flex; align-items: flex-start; gap: 10px; }
.search > span { line-height: 64px; }
.ring { padding: 2px 1px 8px 8px; background: #cfdcfb; border-radius: 0 0 8px 12px; }
.search-box {
  width: 324px; height: 58px; padding: 0 17px 0 16px;
  display: flex; align-items: center; justify-content: space-between;
  border-radius: 8px; background: #fff;
}
.typed { text-decoration: underline wavy #ee3a3a 2px; text-underline-offset: 1px; }

.grid { width: 2068px; margin-top: 29px; table-layout: fixed; border-collapse: separate; border-spacing: 0; border-left: 2px solid #e3e4ea; }
.c1 { width: 509px; } .c2 { width: 272px; } .c3 { width: 252px; }
.c4 { width: 310px; } .c5 { width: 423px; } .c6 { width: 300px; }
th {
  height: 90px; position: relative; padding: 0;
  background: #f5f6fb; color: #0c0d12;
  border-top: 4px solid #e3e4ea; border-bottom: 4px solid #e3e4ea; border-right: 2px solid #e3e4ea;
  font-size: 25px; font-weight: 700; letter-spacing: .3px; text-align: center;
}
.th-left { text-align: left; padding-left: 24px; }
.th-sort { padding-right: 36px; }
.sort { position: absolute; right: 14px; top: 28px; }
td {
  height: 130px; padding: 0; vertical-align: top; text-align: center;
  background: #fafbfe;
  border-bottom: 2px solid #e3e4ea; border-right: 2px solid #e3e4ea;
  font-size: 28px;
}
.td-name { text-align: left; padding: 27px 0 0 24px; }
.u-name { line-height: 32px; font-size: 29px; }
.u-mail { line-height: 28px; margin-top: 14px; font-size: 23px; color: #6a6e79; }
.td-dash { padding-top: 26px; line-height: 34px; }
.td-badge { padding-top: 26px; }
.badge {
  display: inline-flex; align-items: center; justify-content: center;
  height: 38px; border-radius: 9px; color: #fff; font-size: 21px; font-weight: 700;
}
.badge-free { width: 86px; background: #ee8433; }
.badge-warn { width: 32px; background: #ef5454; }
.td-date { padding-top: 30px; line-height: 30px; font-size: 22px; font-weight: 600; }
.td-act { padding-top: 22px; }
.btn-del {
  width: 94px; height: 70px; padding: 0; border: 0; border-radius: 8px;
  display: inline-flex; align-items: center; justify-content: center;
  background: #ef5754;
}

.foot { margin-top: 16px; display: flex; justify-content: space-between; align-items: center; font-size: 28px; }
.info { margin-top: 10px; font-size: 28.500px; letter-spacing: .44px; }
.pager { height: 70px; display: flex; color: #6a6e79; }
.pg { display: flex; align-items: center; justify-content: center; border: 2px solid #e3e4ea; }
.pg-prev { width: 165px; border-right: 0; border-radius: 8px 0 0 8px; }
.pg-on { width: 64px; border: 0; background: #5487f5; color: #fff; }
.pg-next { width: 112px; border-left: 0; border-radius: 0 8px 8px 0; }

/* strip of window behind */
.behind {
  height: 14px; flex: none; margin-top: -2px; position: relative; z-index: -1;
  background: linear-gradient(#000, #000) 588px 0 / 2px 100% no-repeat, #222322;
  border-radius: 0 0 12px 12px;
}

/* dock */
.dockrow { flex: 1; padding-left: 119px; padding-top: 2px; background: linear-gradient(90deg, #05080f 0 119px, #0a131e 2760px); }
.dock {
  width: 2641px; height: 100%;
  display: flex; padding-left: 4px;
  background: #161f2e;
  border: 2px solid #323a4a; border-bottom: 0;
  border-radius: 16px 16px 0 0;
}
.slot { width: 139px; height: 100%; flex: none; display: grid; grid-template-rows: 150px 8px; justify-items: center; align-items: center; position: relative; }
.dot { width: 8px; height: 8px; border-radius: 50%; background: #8b93a6; }
.dot-off { background: transparent; }
.dock-sep { width: 2px; height: 118px; margin: 20px 29px 0 32px; background: #4b5364; flex: none; }
.dock-sep-2 { margin: 20px 27px 0 32px; }
.dock-badge {
  position: absolute; top: 13px; left: 89px;
  width: 48px; height: 48px; border-radius: 50%;
  display: flex; align-items: center; justify-content: center;
  background: #d94a3d; color: #fff; font: 400 28px Roboto, sans-serif;
}
.term {
  width: 112px; height: 100px; padding: 7px;
  background: #000; border: 2px solid #9aa0a8; border-radius: 6px;
}
.term-inner {
  display: block; height: 100%; padding: 8px 6px;
  background: #242424; color: #fff; font: 700 30px "Liberation Mono", monospace; line-height: 1;
}
.thumb { width: 122px; height: 67px; position: relative; margin-top: -24px; }
.thumb-black { background: #050505; }
.thumb-grey { background: #38383a; }
.thumb-white { background: #f5f6fb; }
.mini { position: absolute; right: -1px; bottom: -27px; }
```
